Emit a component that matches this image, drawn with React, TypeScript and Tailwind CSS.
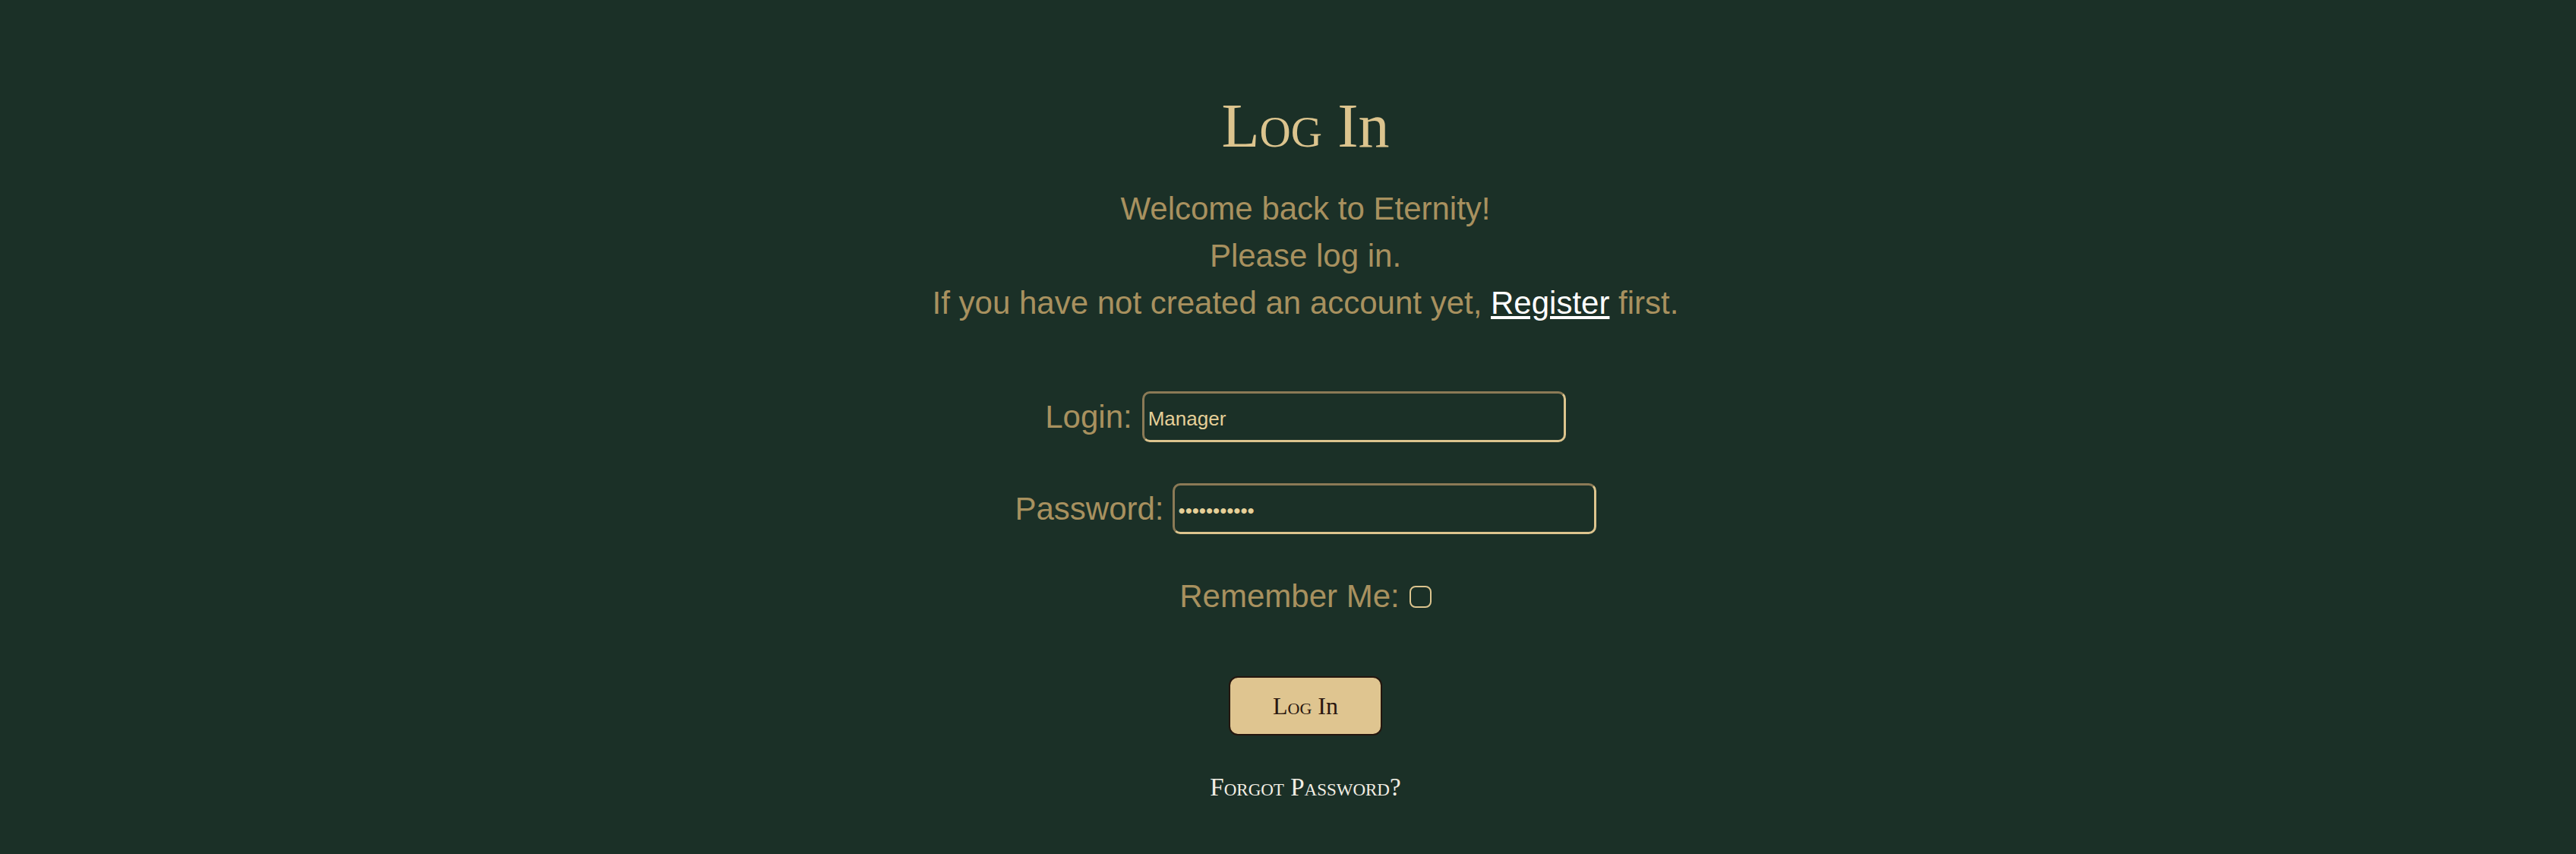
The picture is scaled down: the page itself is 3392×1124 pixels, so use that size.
import { useState } from "react";

const sans = "font-['Liberation_Sans',Arial,sans-serif]";
const serif = "font-['Liberation_Serif','Times_New_Roman',serif] [font-variant:small-caps]";

const inputCls =
  "h-[67px] w-[558px] rounded-[10px] border-[3px] border-t-[#8b7a56] border-l-[#8b7a56] border-r-[#dcc48e] border-b-[#dcc48e] bg-transparent pl-[5px] pr-[5px] pt-[6px] pb-0 text-[26px] text-[#e5cf98] outline-none";

function LogInText() {
  return (
    <>
      Log I<span className="[font-variant:normal]">n</span>
    </>
  );
}

export default function App() {
  const [login, setLogin] = useState("Manager");
  const [password, setPassword] = useState("secretpass1");
  const [remember, setRemember] = useState(false);

  return (
    <div className="min-h-[1124px] w-full bg-[#1b3027] pl-[46px]">
      <div className="flex flex-col items-center pt-[125px] pb-[60px]">
        <h1 className={`${serif} text-[82px] leading-[82px] text-[#dcc48e] font-normal`}>
          <LogInText />
        </h1>

        <div className={`${sans} mt-[37px] flex flex-col items-center text-[42px] leading-[62px] text-[#a8915f]`}>
          <p>Welcome back to Eternity!</p>
          <p>Please log in.</p>
          <p>
            If you have not created an account yet,{" "}
            <a href="#" className="text-white underline">
              Register
            </a>{" "}
            first.
          </p>
        </div>

        <form
          onSubmit={(e) => e.preventDefault()}
          className={`${sans} mt-[85px] flex flex-col items-center text-[#a8915f]`}
        >
          <div className="flex items-center gap-[13px]">
            <label htmlFor="login" className="text-[42px] leading-[48px]">
              Login:
            </label>
            <input
              id="login"
              type="text"
              value={login}
              onChange={(e) => setLogin(e.target.value)}
              className={inputCls}
            />
          </div>

          <div className="mt-[54px] flex items-center gap-[11px]">
            <label htmlFor="password" className="text-[42px] leading-[48px]">
              Password:
            </label>
            <input
              id="password"
              type="password"
              value={password}
              onChange={(e) => setPassword(e.target.value)}
              className={inputCls}
            />
          </div>

          <div className="mt-[58px] flex items-center gap-[13px]">
            <label htmlFor="remember" className="text-[42px] leading-[48px]">
              Remember Me:
            </label>
            <input
              id="remember"
              type="checkbox"
              checked={remember}
              onChange={(e) => setRemember(e.target.checked)}
              className="h-[29px] w-[29px] appearance-none rounded-[8px] border-2 border-[#dcc48e] bg-transparent checked:bg-[#dcc48e]"
            />
          </div>

          <button
            type="submit"
            className={`${serif} mt-[81px] h-[78px] w-[202px] rounded-[12px] border-2 border-[#24160e] bg-[#dfc590] text-[32px] text-[#2a1810]`}
          >
            <LogInText />
          </button>
        </form>

        <a href="#" className={`${serif} mt-[48px] text-[33px] leading-[40px] text-[#f2eee4]`}>
          Forgot Password?
        </a>
      </div>
    </div>
  );
}
